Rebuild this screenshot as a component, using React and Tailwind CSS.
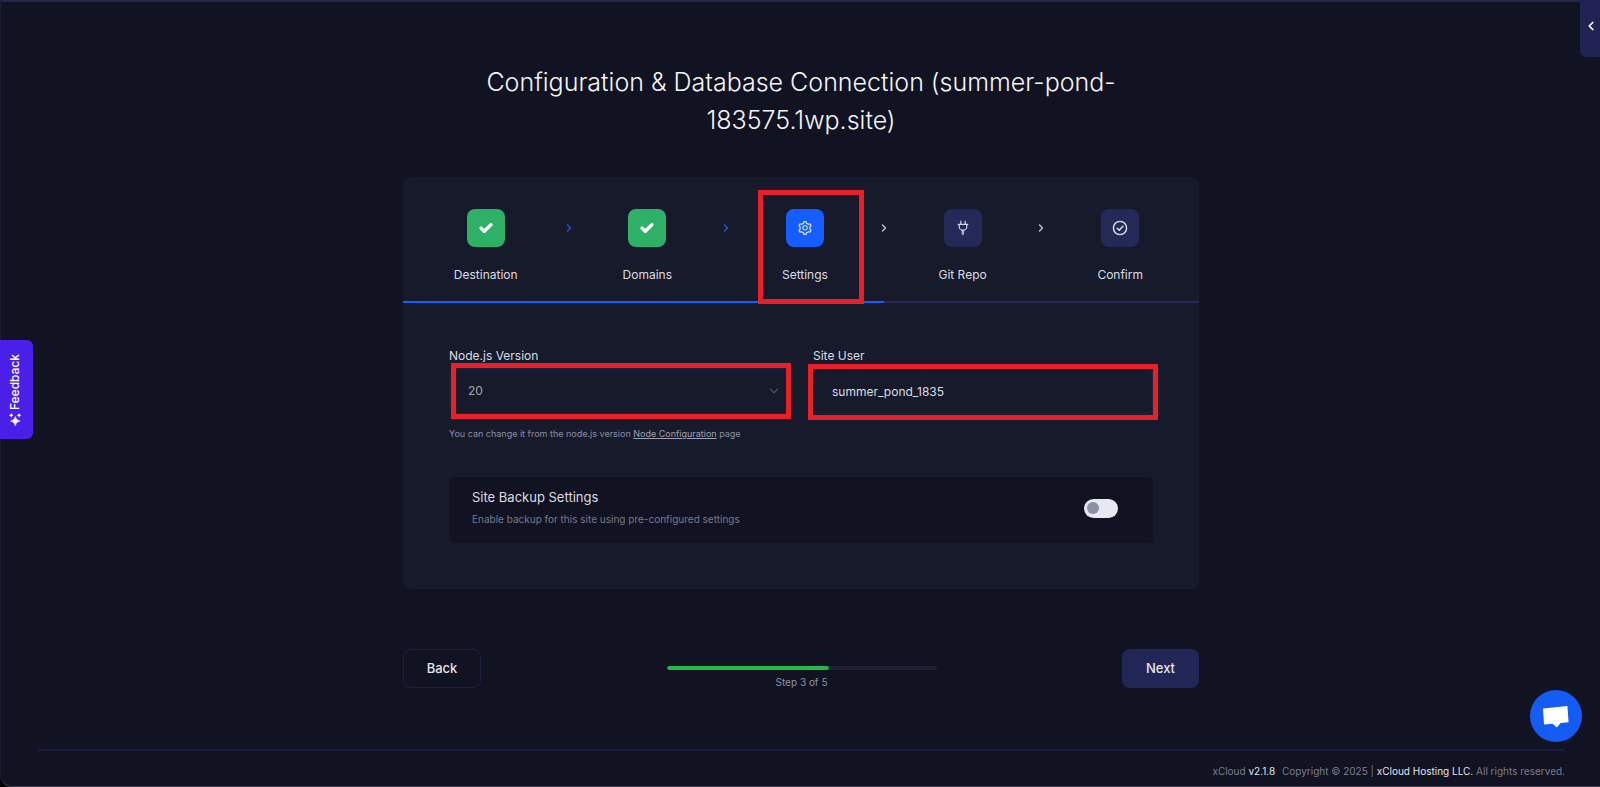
import { useState } from "react";
import { ChevronDown, ChevronLeft, ChevronRight } from "lucide-react";
import { AiOutlineSetting } from "react-icons/ai";

function TickIcon() {
  return (
    <svg viewBox="0 0 14 12" className="h-3 w-3.5" fill="none" stroke="#fff" strokeWidth="3.4" strokeLinecap="round" strokeLinejoin="round" aria-hidden="true">
      <path d="M2.1 6.1 L5.3 9.2 L11.9 2.7" />
    </svg>
  );
}

function PlugIcon() {
  return (
    <svg viewBox="0 0 16 16" className="size-4" fill="none" stroke="#d5d6e4" strokeWidth="1.2" strokeLinecap="round" strokeLinejoin="round" aria-hidden="true">
      <path d="M5.8 1.2 V4.2 M10.2 1.2 V4.2 M3.2 4.4 H12.8 M4.2 4.6 V6.4 a3.8 3.8 0 0 0 7.6 0 V4.6" />
      <path d="M7.2 10.4 H8.8 L8.4 14.6 H7.6 Z" fill="#d5d6e4" strokeWidth="0.6" />
    </svg>
  );
}

function CircleTickIcon() {
  return (
    <svg viewBox="0 0 16 16" className="size-4" fill="none" stroke="#e4e5ee" strokeWidth="1.4" strokeLinecap="round" strokeLinejoin="round" aria-hidden="true">
      <circle cx="8" cy="8" r="6.6" />
      <path d="M5.2 8.3 L7.2 10.2 L10.9 6.2" />
    </svg>
  );
}

function SparkleIcon() {
  return (
    <svg viewBox="0 0 14 14" className="size-3.5" fill="#fff" aria-hidden="true">
      <path d="M5 2.4 Q5.7 6.5 9.6 7.2 Q5.7 7.9 5 12 Q4.3 7.9 0.4 7.2 Q4.3 6.5 5 2.4 Z" stroke="#fff" strokeWidth="0.6" />
      <path d="M10.7 0.8 Q11.1 2.8 13 3.2 Q11.1 3.6 10.7 5.6 Q10.3 3.6 8.4 3.2 Q10.3 2.8 10.7 0.8 Z" />
      <path d="M10.7 8.6 Q11.1 10.6 13 11 Q11.1 11.4 10.7 13.4 Q10.3 11.4 8.4 11 Q10.3 10.6 10.7 8.6 Z" />
    </svg>
  );
}

const steps = [
  { label: "Destination", icon: <TickIcon />, box: "bg-[#2eb066]", line: "border-[#155dfc]", chevron: "text-[#1f56d8]", grow: "grow-[21]" },
  { label: "Domains", icon: <TickIcon />, box: "bg-[#2eb066]", line: "border-[#155dfc]", chevron: "text-[#1f56d8]", grow: "grow-[20]" },
  { label: "Settings", icon: <AiOutlineSetting className="size-4 text-[#e6eeff]" aria-hidden="true" />, box: "bg-[#155dfc]", line: "border-[#155dfc]", chevron: "text-[#b9bac6]", grow: "grow-[20]", current: true },
  { label: "Git Repo", icon: <PlugIcon />, box: "bg-[#25295a]", line: "border-[#25285a]", chevron: "text-[#b9bac6]", grow: "grow-[20]" },
  { label: "Confirm", icon: <CircleTickIcon />, box: "bg-[#25295a]", line: "border-[#25285a]", grow: "grow-[20]" },
];

function Steps() {
  return (
    <ol className="flex">
      {steps.map((s) => (
        <li key={s.label} aria-current={s.current ? "step" : undefined} className={`relative flex basis-0 border-b-2 pt-8 pb-3.5 ${s.grow} ${s.line}`}>
          <div className="flex flex-1 flex-col items-center gap-4">
            <span className={`flex size-[38px] items-center justify-center rounded-lg ${s.box}`}>{s.icon}</span>
            <span className="text-xs leading-6 text-[#dcdde3]">{s.label}</span>
          </div>
          {s.chevron && (
            <span className={`flex h-[38px] w-0 items-center justify-center ${s.chevron}`}>
              <ChevronRight className="size-3 shrink-0" strokeWidth={3} aria-hidden="true" />
            </span>
          )}
          {s.current && <span className="pointer-events-none absolute top-[13px] right-5 -bottom-[3px] left-8 z-10 border-5 border-[#e8202a]" />}
        </li>
      ))}
    </ol>
  );
}

export default function App() {
  const [backup, setBackup] = useState(false);
  const [user, setUser] = useState("summer_pond_1835");

  return (
    <div className="min-h-screen bg-black font-['Inter',sans-serif]">
      <div className="flex min-h-screen flex-col rounded-bl-xl border-t-2 border-b border-l border-t-[#22264c] border-b-[#3f4152] border-l-[#1c1e34] bg-[#111222]">
        <main className="grow pl-px">
          <div className="mx-auto w-full max-w-[796px] pt-[61px]">
            <h1 className="mx-auto max-w-[640px] text-center text-[25px] leading-[38px] font-light text-[#f4f4f6]">
              Configuration &amp; Database Connection (summer-pond-183575.1wp.site)
            </h1>

            <section className="mt-[38px] rounded-lg bg-[#171a2b]">
              <Steps />
              <div className="px-[46px] pt-[43px] pb-[46px]">
                <div className="grid grid-cols-2 gap-6">
                  <div className="flex flex-col">
                    <label htmlFor="node-version" className="text-xs leading-5 text-[#dcdde3]">Node.js Version</label>
                    <div className="relative mt-0.5">
                      <select id="node-version" className="h-[46px] w-full appearance-none rounded-md border border-[#1e2440] bg-[#171a2b] px-[18px] text-xs text-[#a3a5b3]">
                        <option>20</option>
                      </select>
                      <ChevronDown className="pointer-events-none absolute top-4 right-2 size-3.5 text-[#4f5264]" aria-hidden="true" />
                      <span className="pointer-events-none absolute -inset-y-[5px] -right-0.5 left-0.5 border-5 border-[#e8202a]" />
                    </div>
                    <p className="mt-2.5 text-[9px] leading-5 text-[#8b8ea1]">
                      You can change it from the node.js version <a href="#node-configuration" className="text-[#a0a2b2] underline">Node Configuration</a> page
                    </p>
                  </div>
                  <div className="flex flex-col">
                    <label htmlFor="site-user" className="text-xs leading-5 text-[#dcdde3]">Site User</label>
                    <div className="relative mt-0.5">
                      <input id="site-user" type="text" value={user} onChange={(e) => setUser(e.target.value)} className="h-[46px] w-full rounded-md border border-[#1e2440] bg-[#171a2b] px-[18px] text-xs text-[#dcdde3]" />
                      <span className="pointer-events-none absolute -top-1 -right-[5px] -bottom-[6px] -left-[5px] border-5 border-[#e8202a]" />
                    </div>
                  </div>
                </div>

                <div className="mt-[33px] flex items-center justify-between rounded-md bg-[#111222] py-2.5 pr-[35px] pl-[23px]">
                  <div>
                    <label htmlFor="site-backup" className="block text-[13px] leading-5 text-[#dcdde3]">Site Backup Settings</label>
                    <p className="mt-0.5 pb-1 text-[10px] leading-5 text-[#777a8c]">Enable backup for this site using pre-configured settings</p>
                  </div>
                  <input
                    id="site-backup"
                    type="checkbox"
                    role="switch"
                    checked={backup}
                    onChange={(e) => setBackup(e.target.checked)}
                    className="mb-1 h-[19px] w-[34px] appearance-none rounded-full bg-[#e6e9f1] p-[3px] before:block before:size-3 before:rounded-full before:bg-[#8e90a5] checked:bg-[#155dfc] checked:before:ml-auto checked:before:bg-white"
                  />
                </div>
              </div>
            </section>

            <div className="mt-[60px] flex items-start justify-between">
              <button type="button" className="h-[39px] w-[78px] rounded-lg border border-[#1c1f42] text-[13px] font-medium text-[#e4e5ea]">Back</button>
              <div className="flex w-[270px] flex-col items-center pt-[17px]">
                <div className="h-1 w-full overflow-hidden rounded-full bg-[#1f2032]">
                  <div className="h-full w-3/5 rounded-full bg-[#23b84c]" />
                </div>
                <p className="mt-1 text-[10px] leading-4 text-[#8f91a1]">Step 3 of 5</p>
              </div>
              <button type="button" className="h-[39px] w-[77px] rounded-lg bg-[#222656] text-[13px] font-medium text-[#e4e5ea]">Next</button>
            </div>
          </div>
        </main>

        <footer className="mr-[35px] ml-[37px] border-t-2 border-[#191c3c] pt-2.5 pb-[5px] text-right text-[10px] leading-5 text-[#7c7e90]">
          xCloud <span className="mr-1 text-[#e4e5ea]">v2.1.8</span> Copyright © 2025 | <a href="#xcloud" className="text-[#e4e5ea]">xCloud Hosting LLC.</a> All rights reserved.
        </footer>
      </div>

      <button type="button" aria-label="Expand panel" className="fixed top-0 right-0 flex h-[57px] w-5 items-center justify-end rounded-bl-md bg-[#202354] pr-0.5 pb-1.5 text-white">
        <ChevronLeft className="size-3.5" strokeWidth={3} aria-hidden="true" />
      </button>

      <button type="button" className="fixed top-[340px] left-0 flex h-[99px] w-[33px] items-center justify-center rounded-r-md bg-[#4a20e8] pr-0.5 text-white">
        <span className="flex -rotate-90 items-center gap-0.5 text-xs font-medium whitespace-nowrap">
          <SparkleIcon />
          Feedback
        </span>
      </button>

      <button type="button" aria-label="Open chat" className="fixed right-[18px] bottom-[45px] flex size-[52px] items-center justify-center rounded-full bg-[#155cf5]">
        <svg viewBox="0 0 52 52" className="size-full" fill="#fff" aria-hidden="true">
          <path d="M13 18.6 L37.4 16 L38.6 32.2 L30.6 33 L26.8 37.4 L22.6 33.8 L14 34.4 Z" />
        </svg>
      </button>
    </div>
  );
}
